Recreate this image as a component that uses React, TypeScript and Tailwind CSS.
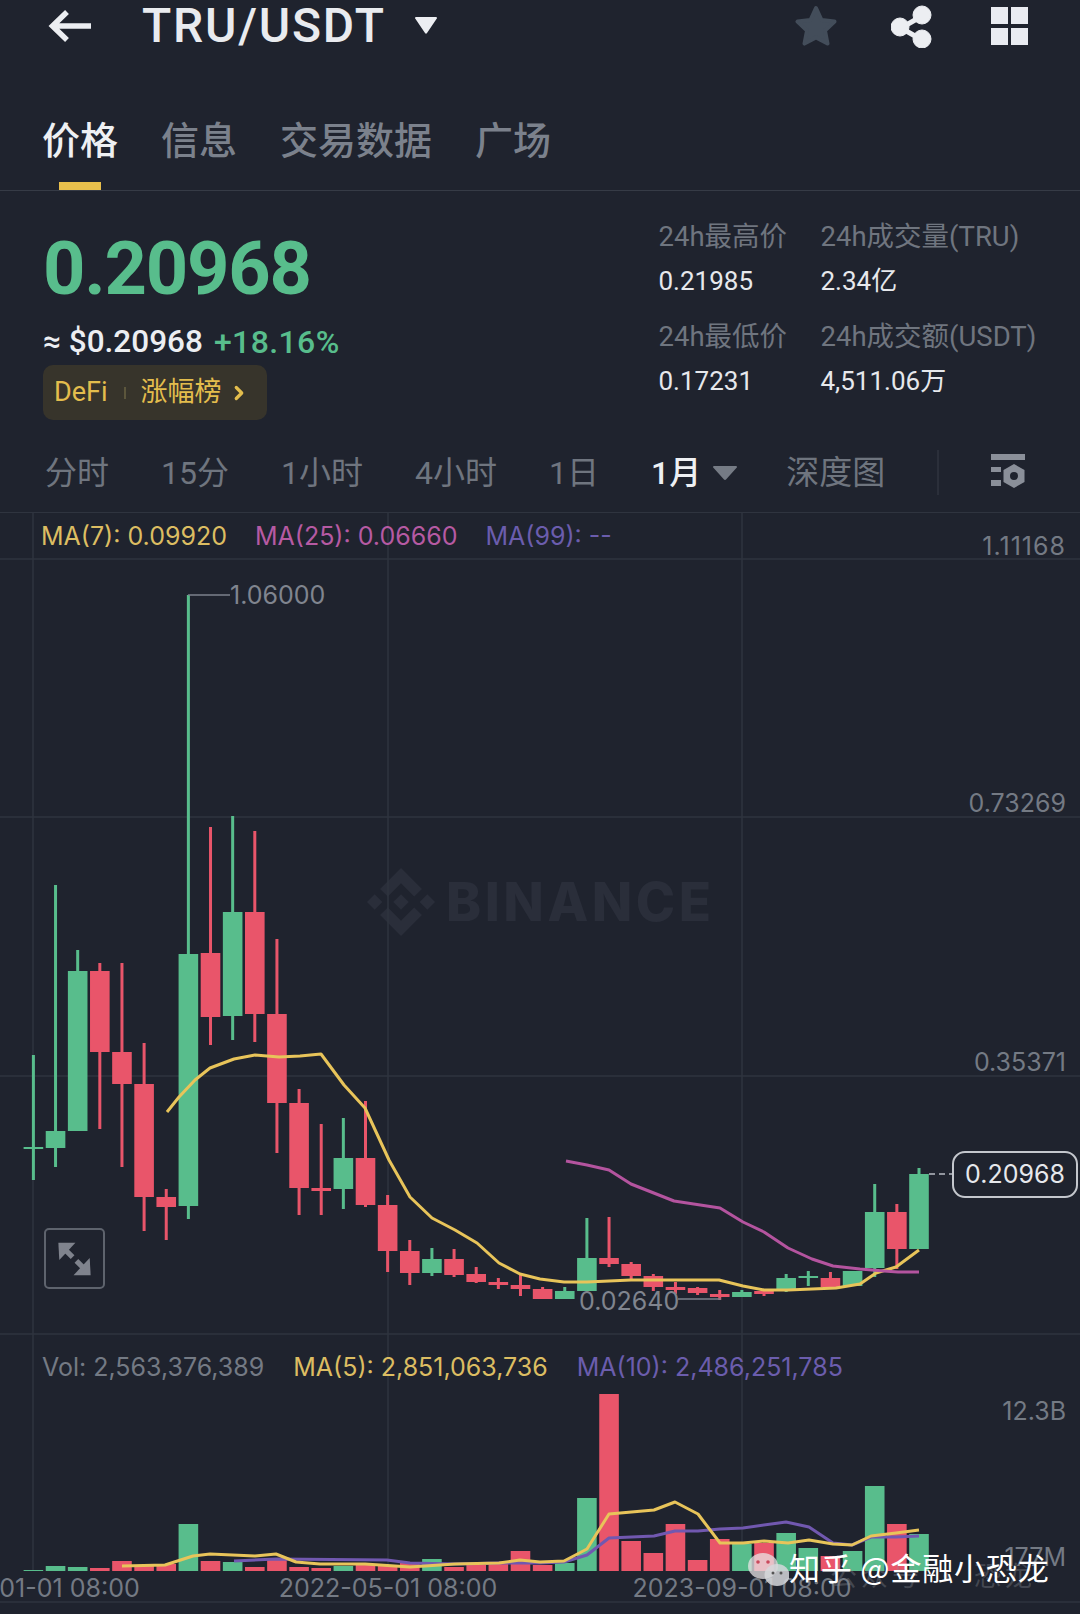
import { ChevronRight } from "lucide-react";

type Candle = [up: number, wickTop: number, wickBottom: number, bodyTop: number, bodyBottom: number];

const candles: Candle[] = [
  [1, 1055, 1180, 1147, 1149],
  [1, 885, 1167, 1131, 1148],
  [1, 950, 1131, 971, 1131],
  [0, 963, 1129, 971, 1052],
  [0, 963, 1167, 1052, 1084],
  [0, 1043, 1231, 1084, 1197],
  [0, 1189, 1240, 1197, 1207],
  [1, 595, 1219, 954, 1206],
  [0, 827, 1045, 953, 1017],
  [1, 816, 1040, 912, 1016],
  [0, 831, 1042, 912, 1014],
  [0, 939, 1153, 1014, 1103],
  [0, 1089, 1215, 1103, 1188],
  [0, 1124, 1215, 1188, 1191],
  [1, 1118, 1209, 1158, 1189],
  [0, 1101, 1207, 1158, 1205],
  [0, 1195, 1272, 1205, 1251],
  [0, 1240, 1285, 1251, 1273],
  [1, 1248, 1276, 1259, 1273],
  [0, 1249, 1277, 1259, 1275],
  [0, 1267, 1283, 1274, 1282],
  [0, 1278, 1289, 1282, 1285],
  [0, 1275, 1296, 1285, 1289],
  [0, 1287, 1299, 1289, 1299],
  [1, 1287, 1299, 1291, 1299],
  [1, 1218, 1291, 1258, 1291],
  [0, 1217, 1267, 1258, 1264],
  [0, 1262, 1279, 1264, 1276],
  [0, 1274, 1291, 1276, 1287],
  [0, 1282, 1294, 1287, 1290],
  [0, 1287, 1295, 1288, 1293],
  [0, 1290, 1300, 1294, 1297],
  [1, 1290, 1297, 1292, 1297],
  [0, 1290, 1296, 1291, 1294],
  [1, 1274, 1292, 1278, 1291],
  [1, 1271, 1286, 1276, 1278],
  [0, 1272, 1288, 1278, 1287],
  [1, 1271, 1286, 1271, 1286],
  [1, 1184, 1277, 1212, 1268],
  [0, 1204, 1269, 1212, 1249],
  [1, 1168, 1249, 1174, 1249],
];

// tops of the volume bars, same order as the candles
const volumes = [
  1570, 1566, 1567, 1568, 1561, 1565, 1564, 1524, 1561, 1562, 1567, 1559, 1567, 1568, 1566, 1565, 1566, 1562, 1559,
  1567, 1565, 1564, 1551, 1565, 1563, 1498, 1394, 1541, 1553, 1524, 1560, 1539, 1544, 1543, 1533, 1548, 1556, 1551,
  1486, 1524, 1534,
];

const ma7 =
  "167,1112 179,1097 195,1080 210,1068 234,1059 255,1055 279,1057 300,1056 321,1054 344,1085 365,1108 389,1160 410,1197 432,1218 455,1230 477,1243 499,1263 520,1274 540,1279 564,1282 587,1282 609,1281 631,1280 676,1280 719,1280 743,1286 764,1290 788,1290 812,1289 836,1288 860,1284 876,1273 896,1267 919,1250";
const ma25 =
  "566,1161 587,1165 609,1170 631,1184 674,1201 720,1208 743,1222 764,1232 788,1248 812,1259 833,1266 860,1269 884,1271 898,1272 919,1272";
const volMa5 =
  "122,1566 165,1565 193,1556 210,1554 255,1556 276,1554 296,1562 320,1564 365,1564 410,1567 455,1564 499,1563 520,1560 540,1562 564,1561 587,1549 609,1514 654,1510 675,1502 698,1514 720,1543 743,1543 764,1541 788,1543 809,1540 833,1544 852,1545 871,1536 896,1533 919,1530";
const volMa10 =
  "234,1561 276,1559 387,1560 410,1563 455,1564 499,1563 540,1563 564,1562 587,1555 609,1538 654,1536 675,1531 698,1531 720,1529 743,1528 786,1522 809,1527 833,1543 852,1545 871,1537 896,1537 919,1536";

const GREEN = "#58bd8c";
const RED = "#e9556a";
const cjk = "font-['Roboto','Noto_Sans_CJK_SC',sans-serif]";

function ChartDrawing() {
  return (
    <svg viewBox="0 513 1080 1101" className="absolute inset-0 h-[1101px] w-[1080px]">
      {/* grid */}
      {[559, 817, 1076, 1334, 1602].map((y) => (
        <line key={y} x1="0" x2="1080" y1={y} y2={y} stroke="#2f343f" strokeWidth="1.5" />
      ))}
      {[33, 388, 742].map((x) => (
        <line key={x} x1={x} x2={x} y1="513" y2="1571" stroke="#2f343f" strokeWidth="1.5" />
      ))}

      {/* candles */}
      {candles.map(([up, wickTop, wickBottom, bodyTop, bodyBottom], i) => {
        const x = 33.4 + 22.14 * i;
        const fill = up ? GREEN : RED;
        return (
          <g key={i} fill={fill}>
            <rect x={x - 1.5} y={wickTop} width="3" height={wickBottom - wickTop} />
            <rect x={x - 9.8} y={bodyTop} width="19.6" height={bodyBottom - bodyTop} />
          </g>
        );
      })}

      {/* volume bars */}
      {volumes.map((top, i) => (
        <rect
          key={i}
          x={33.4 + 22.14 * i - 9.8}
          y={top}
          width="19.6"
          height={1571 - top}
          fill={candles[i][0] ? GREEN : RED}
        />
      ))}

      <polyline points={ma7} fill="none" stroke="#e8c45a" strokeWidth="3" strokeLinejoin="round" />
      <polyline points={ma25} fill="none" stroke="#b4549f" strokeWidth="3" strokeLinejoin="round" />
      <polyline points={volMa10} fill="none" stroke="#7158b0" strokeWidth="3" strokeLinejoin="round" />
      <polyline points={volMa5} fill="none" stroke="#e8c45a" strokeWidth="3" strokeLinejoin="round" />

      {/* leaders */}
      <line x1="188" x2="230" y1="595" y2="595" stroke="#7d828c" strokeWidth="1.5" />
      <line x1="678" x2="721" y1="1299" y2="1299" stroke="#7d828c" strokeWidth="1.5" />
      <line x1="929" x2="952" y1="1174" y2="1174" stroke="#b8bcc4" strokeWidth="1.5" strokeDasharray="6 4" />
    </svg>
  );
}

function BinanceMark() {
  return (
    <svg viewBox="0 0 126.61 126.61" className="h-[68px] w-[68px]" fill="#2a2e3a">
      <path d="M38.73 53.2l24.59-24.58 24.6 24.6 14.3-14.31L63.32 0 24.42 38.9l14.31 14.3z" />
      <path d="M0 63.31l14.3-14.31 14.31 14.31-14.31 14.3z" />
      <path d="M38.73 73.41l24.59 24.59 24.6-24.6 14.31 14.29-38.9 38.91-38.91-38.88-.02-.02z" />
      <path d="M98.01 63.31l14.3-14.31 14.3 14.3-14.3 14.32z" />
      <path d="M77.83 63.3L63.32 48.78 52.59 59.51l-1.24 1.23-2.54 2.54 14.51 14.5 14.51-14.47z" />
    </svg>
  );
}

function Stat({ label, value, className }: { label: string; value: string; className?: string }) {
  return (
    <div className={className}>
      <div className="h-[34px] whitespace-nowrap text-[27.5px] leading-[34px] text-[#6f757f]">{label}</div>
      <div className="mt-[10px] h-[34px] text-[26px] leading-[34px] text-[#e6e8ec]">{value}</div>
    </div>
  );
}

export default function App() {
  return (
    <div className={`flex h-[1614px] w-[1080px] flex-col overflow-hidden bg-[#1f232e] ${cjk}`}>
      {/* Header */}
      <div className="flex h-[52px] shrink-0 items-center pl-[48px]">
        <svg viewBox="0 0 44 34" className="h-[34px] w-[44px]" fill="none" stroke="#eceef2" strokeWidth="5.5">
          <path d="M43 17H5M19 3L4.5 17 19 31" />
        </svg>
        <span className="ml-[50px] text-[48px] font-medium leading-[52px] tracking-[1.8px] text-[#e9ebef]">
          TRU/USDT
        </span>
        <svg viewBox="0 0 22 17" className="ml-[29px] mb-[2px] h-[17px] w-[22px]" fill="#eceef2">
          <path d="M1 0h20a1 1 0 0 1 .8 1.6L12 16a1.2 1.2 0 0 1-2 0L.2 1.6A1 1 0 0 1 1 0z" />
        </svg>
        {/* star, share, grid */}
        <svg viewBox="0 0 42 42" className="ml-[358px] h-[42px] w-[42px]" fill="#434d5a" stroke="#434d5a" strokeWidth="4" strokeLinejoin="round">
          <path d="M21 3l5.5 12 13 1.6-9.5 9 2.5 13L21 32.5 9.500 38.600l2.500-13-9.500-9 13-1.600z" />
        </svg>
        <svg viewBox="0 0 42 44" className="ml-[54px] h-[44px] w-[42px]" fill="#eceef2" stroke="#eceef2">
          <path d="M31 12L10 24l21 12" fill="none" strokeWidth="5" />
          <circle cx="31" cy="11" r="9" />
          <circle cx="9" cy="23" r="9" />
          <circle cx="31" cy="35" r="9" />
        </svg>
        <div className="ml-[58px] grid grid-cols-[17px_17px] gap-[3.500px]">
          <div className="h-[17px] bg-[#e9ebf1]" />
          <div className="h-[17px] bg-[#e9ebf1]" />
          <div className="h-[17px] bg-[#e9ebf1]" />
          <div className="h-[17px] bg-[#e9ebf1]" />
        </div>
      </div>

      {/* Tabs */}
      <div className="flex h-[139px] shrink-0 items-end gap-[43px] border-b-[1.500px] border-[#363b46] pl-[42px] text-[38px] font-medium text-[#7b818c]">
        <div className="relative h-[69px] leading-[40px] text-[#eef0f3]">
          价格
          <div className="absolute bottom-0 left-[17px] h-[8px] w-[42px] bg-[#e8bf4c]" />
        </div>
        <div className="h-[69px] leading-[40px]">信息</div>
        <div className="h-[69px] leading-[40px]">交易数据</div>
        <div className="h-[69px] leading-[40px]">广场</div>
      </div>

      {/* Price summary */}
      <div className="flex h-[246px] shrink-0 justify-between pl-[43px] pr-[21.5px]">
        <div className="pt-[40px]">
          <div className="h-[76px] text-[74px] font-bold leading-[76px] tracking-[-1.2px] text-[#58bd8c]">0.20968</div>
          <div className="mt-[17px] flex h-[36px] items-center font-medium leading-[36px]">
            <span className="text-[31.5px] text-[#eceef2]">≈ $0.20968</span>
            <span className="ml-[11px] text-[32px] tracking-[0.4px] text-[#58bd8c]">+18.16%</span>
          </div>
          <div className="mt-[5px] flex h-[55px] w-[224px] items-center rounded-[10px] bg-[#37342b] pl-[11px] text-[27px] text-[#e3bd4d]">
            <span>DeFi</span>
            <span className="ml-[16px] h-[12px] w-[2px] bg-[#5c563c]" />
            <span className="ml-[15px]">涨幅榜</span>
            <ChevronRight className="ml-[6px] h-[22px] w-[22px]" strokeWidth={3.5} />
          </div>
        </div>
        <div className="grid h-fit w-[400px] grid-cols-[162px_1fr] pt-[29px]">
          <Stat label="24h最高价" value="0.21985" />
          <Stat label="24h成交量(TRU)" value="2.34亿" />
          <Stat label="24h最低价" value="0.17231" className="mt-[22px]" />
          <Stat label="24h成交额(USDT)" value="4,511.06万" className="mt-[22px]" />
        </div>
      </div>

      {/* Intervals */}
      <div className="flex h-[76px] shrink-0 items-center gap-[52px] border-b-[1.500px] border-[#2f343f] pb-[4px] pl-[45px] text-[32px] text-[#6f757f]">
        <span>分时</span>
        <span>15分</span>
        <span>1小时</span>
        <span>4小时</span>
        <span>1日</span>
        <span className="flex items-center gap-[12px] font-medium text-[#eef0f3]">
          1月
          <svg viewBox="0 0 24 14" className="h-[14px] w-[24px]" fill="#757b85">
            <path d="M1 0h22a1 1 0 0 1 .8 1.600L13 13.500a1.400 1.400 0 0 1-2 0L.2 1.600A1 1 0 0 1 1 0z" />
          </svg>
        </span>
        <span className="-ml-[3px] text-[33px]">深度图</span>
        <span className="h-[45px] w-[1.500px] bg-[#2b2f3a]" />
        <svg viewBox="0 0 36 38" className="h-[38px] w-[36px]" fill="#8a8f99">
          <rect x="0" y="0" width="34" height="6" />
          <rect x="0" y="13" width="10" height="5" />
          <rect x="0" y="26" width="10" height="6" />
          <path fillRule="evenodd" d="M23 10l10.500 6v12L23 34l-10.500-6V16zM23 18a4 4 0 1 0 0 8 4 4 0 0 0 0-8z" />
        </svg>
      </div>

      {/* Chart */}
      <div className="relative flex-1 font-['Inter',sans-serif] text-[25px] text-[#747a84]">
        <div className="absolute left-[367px] top-[355px] flex items-center gap-[11px] text-[#2a2e3a]">
          <BinanceMark />
          <span className="text-[53px] font-extrabold leading-none tracking-[3.5px]">BINANCE</span>
        </div>
        <ChartDrawing />

        {/* Price pane */}
        <div className="relative h-[820px]">
          <div className="flex h-[30px] translate-y-[8px] gap-[28px] pl-[41px] leading-[30px]">
            <span className="text-[#dcbd62]">MA(7): 0.09920</span>
            <span className="text-[#b65aa3]">MA(25): 0.06660</span>
            <span className="text-[#6b5dad]">MA(99): --</span>
          </div>
          <span className="absolute right-[14px] top-[18px] leading-[30px] tracking-[1px]">1.11168</span>
          <span className="absolute right-[14px] top-[275px] leading-[30px]">0.73269</span>
          <span className="absolute right-[14px] top-[534px] leading-[30px]">0.35371</span>
          <span className="absolute left-[230px] top-[67px] leading-[30px] text-[#80858f]">1.06000</span>
          <span className="absolute left-[579px] top-[773px] leading-[30px] text-[#80858f]">0.02640</span>
          <div className="absolute left-[952px] top-[638px] flex h-[47px] w-[126px] items-center justify-center rounded-[13px] border-2 border-[#c4c7cd] bg-[#1f232e] text-[#e6e8ec]">
            0.20968
          </div>
          <div className="absolute left-[44px] top-[715px] flex h-[61px] w-[61px] items-center justify-center rounded-[5px] border-2 border-[#5e636d]">
            <svg viewBox="0 0 60 60" className="h-[60px] w-[60px]" fill="#7f838d" stroke="#7f838d">
              <path d="M13 13h18L14 31z" strokeWidth="0" />
              <path d="M47 47H29l17-18z" strokeWidth="0" />
              <path d="M19 19l9 9M32 32l9 9" strokeWidth="5.500" />
            </svg>
          </div>
        </div>

        {/* Volume pane */}
        <div className="relative flex-1">
          <div className="flex h-[30px] translate-y-[19px] pl-[42px] leading-[30px]">
            <span>Vol: 2,563,376,389</span>
            <span className="ml-[29px] text-[#dcbd62]">MA(5): 2,851,063,736</span>
            <span className="ml-[29px] text-[#6b5dad]">MA(10): 2,486,251,785</span>
          </div>
          <span className="absolute right-[14px] top-[63px] leading-[30px]">12.3B</span>
          <span className="absolute right-[14px] top-[209px] leading-[30px]">177M</span>
          <span className="absolute left-[33px] top-[240px] -translate-x-1/2 whitespace-nowrap leading-[30px]">
            2022-01-01 08:00
          </span>
          <span className="absolute left-[388px] top-[240px] -translate-x-1/2 whitespace-nowrap leading-[30px]">
            2022-05-01 08:00
          </span>
          <span className="absolute left-[742px] top-[240px] -translate-x-1/2 whitespace-nowrap leading-[30px]">
            2023-09-01 08:00
          </span>

          {/* Zhihu repost stamp */}
          <span className="absolute left-[830px] top-[224px] whitespace-nowrap font-['Noto_Sans_CJK_SC',sans-serif] text-[27px] leading-[36px] tracking-[4px] text-[#8a8d94]/35">
            公众号 · 恐龙
          </span>
          <svg viewBox="0 0 42 34" className="absolute left-[747px] top-[220px] h-[34px] w-[42px]">
            <ellipse cx="16" cy="13" rx="15" ry="13" fill="#e8e4e6" fillOpacity="0.75" />
            <ellipse cx="30" cy="22" rx="12.500" ry="11" fill="#d6d7da" fillOpacity="0.85" />
            <circle cx="11" cy="9" r="1.800" fill="#c9495c" />
            <circle cx="21" cy="9" r="1.800" fill="#c9495c" />
            <circle cx="26" cy="20" r="1.500" fill="#555" />
            <circle cx="34" cy="20" r="1.500" fill="#555" />
          </svg>
          <span className="absolute left-[789px] top-[214px] whitespace-nowrap font-['Noto_Sans_CJK_SC',sans-serif] text-[31px] leading-[40px] tracking-[0.8px] text-white">
            知乎 @金融小恐龙
          </span>
        </div>
      </div>
    </div>
  );
}
